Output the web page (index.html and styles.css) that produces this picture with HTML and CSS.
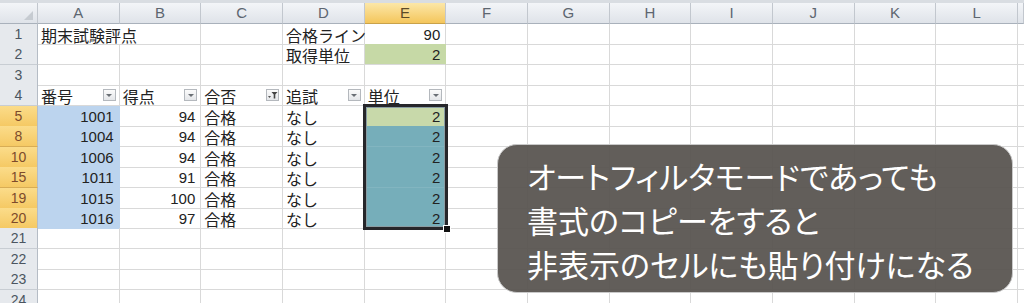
FILE: index.html
```html
<!DOCTYPE html>
<html>
<head>
  <meta charset="UTF-8">
  <meta name="viewport" content="width=device-width, initial-scale=1.0">
  <title>期末試験評点</title>
  <link rel="stylesheet" href="styles.css">
</head>
<body>
  <div class="sheet">
    <div class="topbar"></div>

    <div class="row head">
      <div class="corner"><span class="corner-tri"></span></div>
      <div class="col">A</div>
      <div class="col">B</div>
      <div class="col">C</div>
      <div class="col">D</div>
      <div class="col active">E</div>
      <div class="col">F</div>
      <div class="col">G</div>
      <div class="col">H</div>
      <div class="col">I</div>
      <div class="col">J</div>
      <div class="col">K</div>
      <div class="col">L</div>
      <div class="col"></div>
    </div>

    <div class="row">
      <div class="num">1</div>
      <div class="cell spill">期末試験評点</div>
      <div class="cell"></div>
      <div class="cell"></div>
      <div class="cell">合格ライン</div>
      <div class="cell val">90</div>
      <div class="cell"></div><div class="cell"></div><div class="cell"></div><div class="cell"></div>
      <div class="cell"></div><div class="cell"></div><div class="cell"></div><div class="cell"></div>
    </div>

    <div class="row">
      <div class="num">2</div>
      <div class="cell"></div>
      <div class="cell"></div>
      <div class="cell"></div>
      <div class="cell">取得単位</div>
      <div class="cell val green">2</div>
      <div class="cell"></div><div class="cell"></div><div class="cell"></div><div class="cell"></div>
      <div class="cell"></div><div class="cell"></div><div class="cell"></div><div class="cell"></div>
    </div>

    <div class="row">
      <div class="num">3</div>
      <div class="cell"></div><div class="cell"></div><div class="cell"></div><div class="cell"></div>
      <div class="cell"></div><div class="cell"></div><div class="cell"></div><div class="cell"></div>
      <div class="cell"></div><div class="cell"></div><div class="cell"></div><div class="cell"></div>
      <div class="cell"></div>
    </div>

    <div class="row">
      <div class="num">4</div>
      <div class="cell">番号<span class="drop"><span class="arrow"></span></span></div>
      <div class="cell">得点<span class="drop"><span class="arrow"></span></span></div>
      <div class="cell">合否<span class="drop">
        <svg width="11" height="10" viewBox="0 0 11 10">
          <path d="M1 6 L4 6 L2.5 8 Z" fill="#555"/>
          <path d="M4.5 2 L10.5 2 L8.3 4.6 L8.3 8.5 L6.7 8.5 L6.7 4.6 Z" fill="#444"/>
        </svg>
      </span></div>
      <div class="cell">追試<span class="drop"><span class="arrow"></span></span></div>
      <div class="cell">単位<span class="drop"><span class="arrow"></span></span></div>
      <div class="cell"></div><div class="cell"></div><div class="cell"></div><div class="cell"></div>
      <div class="cell"></div><div class="cell"></div><div class="cell"></div><div class="cell"></div>
    </div>

    <div class="row">
      <div class="num picked">5</div>
      <div class="cell val blue">1001</div>
      <div class="cell val">94</div>
      <div class="cell">合格</div>
      <div class="cell">なし</div>
      <div class="cell val pale">2</div>
      <div class="cell"></div><div class="cell"></div><div class="cell"></div><div class="cell"></div>
      <div class="cell"></div><div class="cell"></div><div class="cell"></div><div class="cell"></div>
    </div>

    <div class="row">
      <div class="num picked">8</div>
      <div class="cell val blue">1004</div>
      <div class="cell val">94</div>
      <div class="cell">合格</div>
      <div class="cell">なし</div>
      <div class="cell val teal">2</div>
      <div class="cell"></div><div class="cell"></div><div class="cell"></div><div class="cell"></div>
      <div class="cell"></div><div class="cell"></div><div class="cell"></div><div class="cell"></div>
    </div>

    <div class="row">
      <div class="num picked">10</div>
      <div class="cell val blue">1006</div>
      <div class="cell val">94</div>
      <div class="cell">合格</div>
      <div class="cell">なし</div>
      <div class="cell val teal">2</div>
      <div class="cell"></div><div class="cell"></div><div class="cell"></div><div class="cell"></div>
      <div class="cell"></div><div class="cell"></div><div class="cell"></div><div class="cell"></div>
    </div>

    <div class="row">
      <div class="num picked">15</div>
      <div class="cell val blue">1011</div>
      <div class="cell val">91</div>
      <div class="cell">合格</div>
      <div class="cell">なし</div>
      <div class="cell val teal">2</div>
      <div class="cell"></div><div class="cell"></div><div class="cell"></div><div class="cell"></div>
      <div class="cell"></div><div class="cell"></div><div class="cell"></div><div class="cell"></div>
    </div>

    <div class="row">
      <div class="num picked">19</div>
      <div class="cell val blue">1015</div>
      <div class="cell val">100</div>
      <div class="cell">合格</div>
      <div class="cell">なし</div>
      <div class="cell val teal">2</div>
      <div class="cell"></div><div class="cell"></div><div class="cell"></div><div class="cell"></div>
      <div class="cell"></div><div class="cell"></div><div class="cell"></div><div class="cell"></div>
    </div>

    <div class="row">
      <div class="num picked">20</div>
      <div class="cell val blue">1016</div>
      <div class="cell val">97</div>
      <div class="cell">合格</div>
      <div class="cell">なし</div>
      <div class="cell val teal">2</div>
      <div class="cell"></div><div class="cell"></div><div class="cell"></div><div class="cell"></div>
      <div class="cell"></div><div class="cell"></div><div class="cell"></div><div class="cell"></div>
    </div>

    <div class="row">
      <div class="num">21</div>
      <div class="cell"></div><div class="cell"></div><div class="cell"></div><div class="cell"></div>
      <div class="cell"></div><div class="cell"></div><div class="cell"></div><div class="cell"></div>
      <div class="cell"></div><div class="cell"></div><div class="cell"></div><div class="cell"></div>
      <div class="cell"></div>
    </div>

    <div class="row">
      <div class="num">22</div>
      <div class="cell"></div><div class="cell"></div><div class="cell"></div><div class="cell"></div>
      <div class="cell"></div><div class="cell"></div><div class="cell"></div><div class="cell"></div>
      <div class="cell"></div><div class="cell"></div><div class="cell"></div><div class="cell"></div>
      <div class="cell"></div>
    </div>

    <div class="row">
      <div class="num">23</div>
      <div class="cell"></div><div class="cell"></div><div class="cell"></div><div class="cell"></div>
      <div class="cell"></div><div class="cell"></div><div class="cell"></div><div class="cell"></div>
      <div class="cell"></div><div class="cell"></div><div class="cell"></div><div class="cell"></div>
      <div class="cell"></div>
    </div>

    <div class="row">
      <div class="num">24</div>
      <div class="cell"></div><div class="cell"></div><div class="cell"></div><div class="cell"></div>
      <div class="cell"></div><div class="cell"></div><div class="cell"></div><div class="cell"></div>
      <div class="cell"></div><div class="cell"></div><div class="cell"></div><div class="cell"></div>
      <div class="cell"></div>
    </div>

    <!-- selected range E5:E20 -->
    <div class="selection"><span class="handle"></span></div>

    <div class="callout">
      <p>オートフィルタモードであっても</p>
      <p>書式のコピーをすると</p>
      <p>非表示のセルにも貼り付けになる</p>
    </div>
  </div>
</body>
</html>
```

FILE: styles.css
```css
body {
  margin: 0;
  background: #fff;
  font-family: "Noto Sans CJK JP", sans-serif;
  overflow: hidden;
}

.sheet {
  position: relative;
  width: 1024px;
  height: 303px;
  overflow: hidden;
}

.topbar {
  height: 3px;
  background: #d9dde2;
}

.row {
  display: grid;
  grid-template-columns: 38px repeat(12, 81.67px) 1fr;
  height: 20.45px;
}

.row.head {
  height: 21px;
}

/* column headers */
.corner,
.col {
  background: linear-gradient(#f3f5f8, #dfe3e9);
  border-right: 1px solid #c2c7ce;
  border-bottom: 1px solid #a9b1bb;
  box-sizing: border-box;
}

.corner {
  position: relative;
}

.corner-tri {
  position: absolute;
  right: 4px;
  bottom: 3px;
  width: 0;
  height: 0;
  border-left: 9px solid transparent;
  border-bottom: 9px solid #c6cbd1;
}

.col {
  font-family: "Liberation Sans", sans-serif;
  font-size: 15px;
  color: #5d6670;
  text-align: center;
  line-height: 20px;
}

.col.active {
  background: linear-gradient(#fce7a8, #f4c65c);
  border-bottom-color: #c9a24a;
  color: #5b4a28;
}

/* row numbers */
.num {
  background: #e6e9ed;
  border-right: 1px solid #b5bcc5;
  border-bottom: 1px solid #c8cdd3;
  box-sizing: border-box;
  font-family: "Liberation Sans", sans-serif;
  font-size: 14px;
  color: #4b5560;
  text-align: center;
  line-height: 20px;
}

.num.picked {
  background: linear-gradient(#fbdc8a, #f5c964);
  border-bottom-color: #d8ad55;
  color: #7d4b2b;
}

/* cells */
.cell {
  position: relative;
  border-right: 1px solid #d9d9d9;
  border-bottom: 1px solid #d9d9d9;
  box-sizing: border-box;
  padding: 0 3px;
  font-size: 16px;
  line-height: 18px;
  color: #222;
  white-space: nowrap;
  display: flex;
  align-items: flex-end;
}

.cell.spill {
  border-right-color: transparent;
  overflow: visible;
}

.cell.val {
  justify-content: flex-end;
  padding-right: 5px;
  font-family: "Liberation Sans", sans-serif;
  font-size: 15px;
}

.blue {
  background: #bcd4ee;
  border-color: #bcd4ee;
}

.green {
  background: #c6d9a6;
  border-right-color: #c6d9a6;
}

.pale {
  background: #c8d9aa;
  border-color: #c8d9aa;
}

.teal {
  background: #76aeba;
  border-color: #82b5c0;
}

/* filter buttons */
.drop {
  position: absolute;
  right: 3px;
  bottom: 4px;
  width: 13px;
  height: 12px;
  box-sizing: border-box;
  border: 1px solid #b4b8bd;
  background: linear-gradient(#fbfbfb, #e4e6e9);
  display: flex;
  align-items: center;
  justify-content: center;
}

.arrow {
  width: 0;
  height: 0;
  border-left: 3px solid transparent;
  border-right: 3px solid transparent;
  border-top: 3px solid #6a6f75;
}

/* selected range */
.selection {
  position: absolute;
  left: 363px;
  top: 104px;
  width: 85px;
  height: 126px;
  box-sizing: border-box;
  border: 3px solid #26262a;
  box-shadow: inset 0 0 0 1px #8a9da3;
}

.handle {
  position: absolute;
  right: -6px;
  bottom: -6px;
  width: 6px;
  height: 6px;
  background: #111;
  border: 1px solid #fff;
}

/* caption box */
.callout {
  position: absolute;
  left: 497px;
  top: 144px;
  width: 516px;
  height: 149px;
  box-sizing: border-box;
  padding: 9px 0 0 29px;
  background: rgba(88, 84, 80, 0.94);
  border: 1px solid #c9c9c9;
  border-radius: 20px;
  color: #fff;
  font-size: 31px;
  line-height: 44px;
  font-feature-settings: "palt";
}

.callout p {
  margin: 0;
  white-space: nowrap;
}
```
